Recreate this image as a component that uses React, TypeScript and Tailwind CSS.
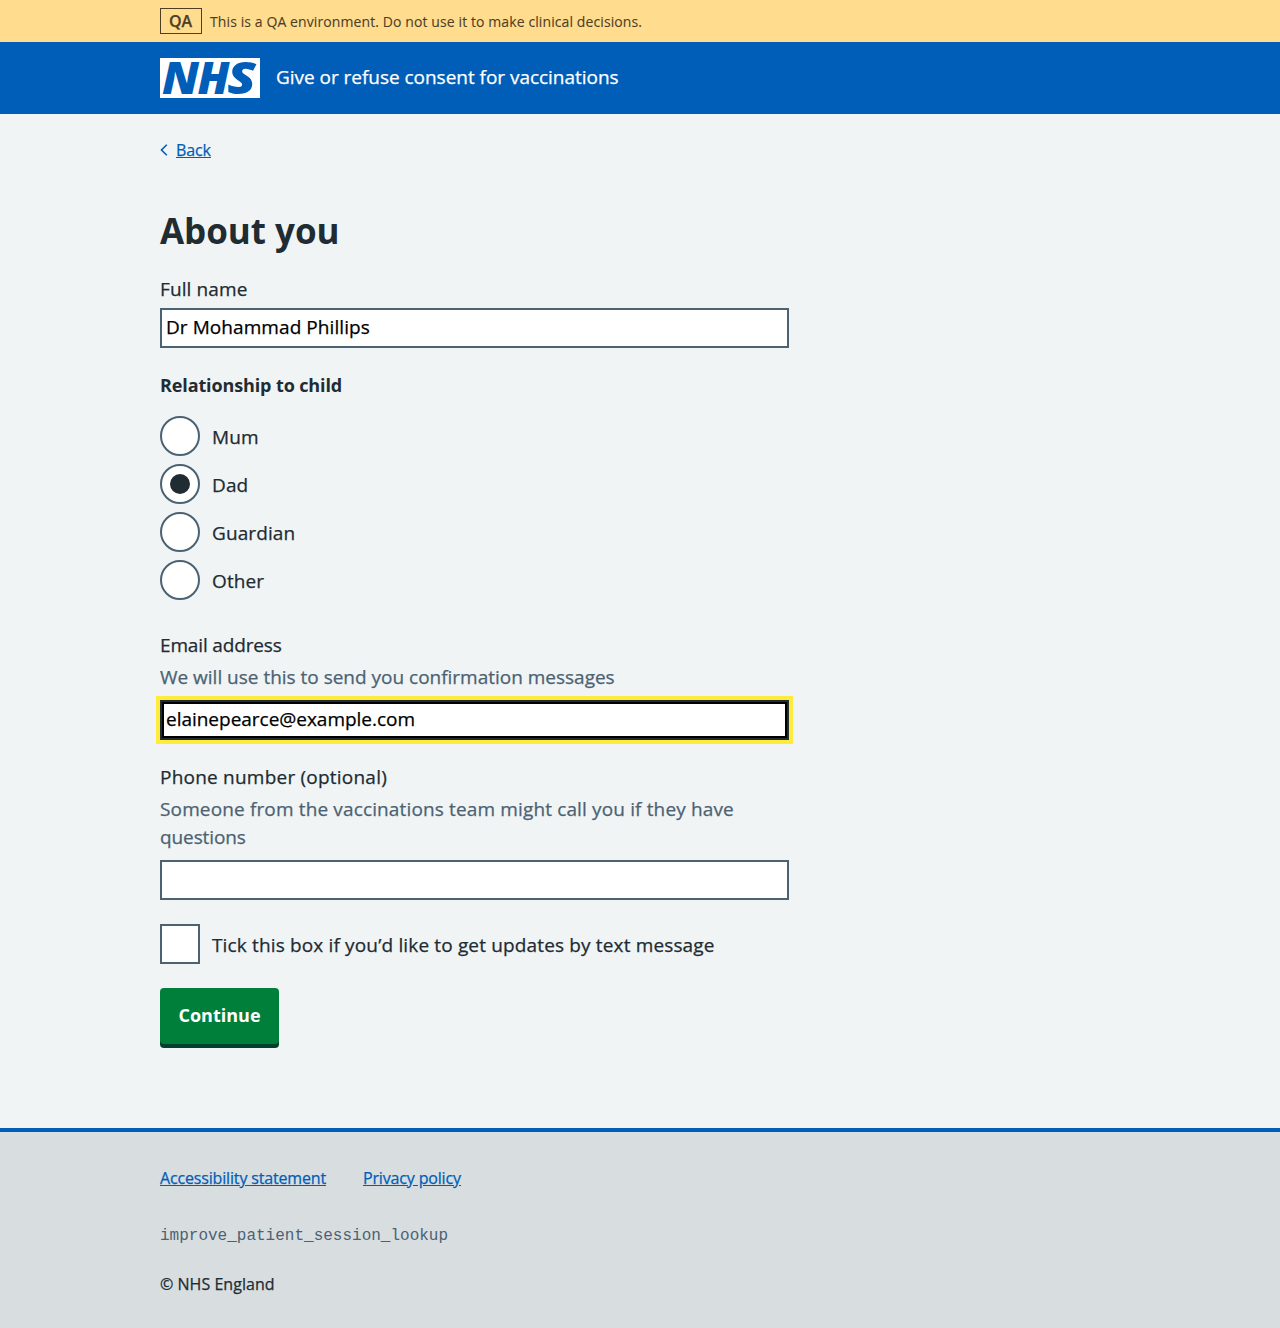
import type { ReactNode } from "react";

function NhsLogo() {
  return (
    <svg className="block h-10 w-[100px] shrink-0 overflow-visible" viewBox="0 0 100 40" role="img" aria-label="NHS">
      <rect width="100" height="40" fill="#fff" />
      <g
        fill="#005eb8"
        fontFamily="'Noto Sans', 'Open Sans', sans-serif"
        fontWeight="900"
        fontStyle="italic"
        fontSize="45"
      >
        <text x="2" y="36" textLength="37" lengthAdjust="spacingAndGlyphs">N</text>
        <text x="37.6" y="36" textLength="32" lengthAdjust="spacingAndGlyphs">H</text>
        <text x="67.3" y="36" textLength="28.7" lengthAdjust="spacingAndGlyphs">S</text>
      </g>
    </svg>
  );
}

function Container({ className, children }: { className?: string; children: ReactNode }) {
  return <div className={`mx-auto w-[960px] ${className ?? ""}`}>{children}</div>;
}

const relationships = [
  { label: "Mum", checked: false },
  { label: "Dad", checked: true },
  { label: "Guardian", checked: false },
  { label: "Other", checked: false },
];

export default function App() {
  return (
    <div className="flex min-h-[1328px] flex-col bg-[#f0f4f5] font-['Open_Sans',sans-serif] text-[19px] leading-7 text-[#212b32] [-webkit-text-stroke-width:0.25px]">
      <div className="h-[42px] bg-[#ffdc8e] text-[#4d3f25]">
        <Container className="flex items-start gap-2 pt-2">
          <strong className="flex h-[26px] w-[42px] items-center justify-center border border-[#4d3f25] pr-px text-[16px] leading-6 font-semibold">
            QA
          </strong>
          <span className="pt-[2px] text-[14px] leading-6 tracking-[0.1px] [-webkit-text-stroke-width:0.1px]">
            This is a QA environment. Do not use it to make clinical decisions.
          </span>
        </Container>
      </div>

      <header className="h-[72px] bg-[#005eb8] text-white">
        <Container className="flex h-full items-center gap-4 [-webkit-text-stroke-width:0]">
          <NhsLogo />
          <span className="pb-0.5 tracking-[-0.03px] [-webkit-text-stroke-width:0.25px]">Give or refuse consent for vaccinations</span>
        </Container>
      </header>

      <Container>
        <a href="#" className="mt-6 flex h-6 items-center text-[16px] leading-6 text-[#005eb8]">
          <svg className="mr-2 h-3 w-2" viewBox="0 0 8 12" fill="none" stroke="currentColor" strokeWidth="1.6">
            <path d="M6.8 0.8 1.5 6l5.3 5.2" />
          </svg>
          <span className="tracking-[-0.1px] underline underline-offset-1">Back</span>
        </a>

        <form className="mt-[47px] w-[629px]">
          <h1 className="text-[35px] leading-[44px] font-bold tracking-[-0.04px] [-webkit-text-stroke-width:0]">About you</h1>

          <label htmlFor="name" className="mt-[22px] block tracking-[0.12px]">Full name</label>
          <input
            id="name"
            defaultValue="Dr Mohammad Phillips"
            className="mt-[5px] block h-10 w-full border-2 border-[#4c6272] bg-white px-1 pb-0.5 text-black tracking-[0.07px]"
          />

          <fieldset className="mt-[23px]">
            <legend className="text-[18px] font-bold tracking-[-0.12px] [-webkit-text-stroke-width:0]">Relationship to child</legend>
            <div className="mt-[17px] flex flex-col gap-2">
              {relationships.map((r) => (
                <label key={r.label} className="flex h-10 items-center gap-3">
                  <span className="flex size-10 items-center justify-center rounded-full border-2 border-[#4c6272] bg-white">
                    {r.checked && <span className="size-5 rounded-full bg-[#212b32]" />}
                  </span>
                  <span className="pt-0.5 tracking-[0.1px]">{r.label}</span>
                </label>
              ))}
            </div>
          </fieldset>

          <label htmlFor="email" className="mt-[31px] block tracking-[-0.15px]">Email address</label>
          <p className="mt-1 tracking-[-0.01px] text-[#4c6272]">We will use this to send you confirmation messages</p>
          <input
            id="email"
            defaultValue="elainepearce@example.com"
            className="mt-[9px] block h-10 w-full border-2 border-[#212b32] bg-white px-1 pb-0.5 text-black tracking-[-0.02px] shadow-[inset_0_0_0_2px_#000,0_0_0_4px_#ffeb3b]"
          />

          <label htmlFor="phone" className="mt-[23px] block tracking-[0.22px]">Phone number (optional)</label>
          <p className="mt-1 tracking-[0.14px] text-[#4c6272]">
            Someone from the vaccinations team might call you if they have
            <br />
            <span className="tracking-[-0.1px]">questions</span>
          </p>
          <input id="phone" className="mt-[9px] block h-10 w-full border-2 border-[#4c6272] bg-white px-1" />

          <label className="mt-6 flex h-10 items-center gap-3">
            <span className="size-10 border-2 border-[#4c6272] bg-white" />
            <span className="pt-0.5 tracking-[0.15px]">Tick this box if you’d like to get updates by text message</span>
          </label>

          <button
            type="button"
            className="mt-6 flex h-14 w-[119px] items-center justify-center rounded-[4px] bg-[#007f3b] pb-0.5 text-[18px] font-bold tracking-[0.02px] text-white shadow-[0_4px_0_#00402c] [-webkit-text-stroke-width:0]"
          >
            Continue
          </button>
        </form>
      </Container>

      <footer className="mt-[84px] h-[200px] border-t-4 border-[#005eb8] bg-[#d8dde0] text-[16px] leading-6">
        <Container className="pt-[34px]">
          <nav className="flex gap-[37px] text-[#005eb8] underline underline-offset-1">
            <a href="#" className="w-[166px] tracking-[-0.16px] whitespace-nowrap">Accessibility statement</a>
            <a href="#" className="tracking-[-0.16px]">Privacy policy</a>
          </nav>
          <p className="mt-[34px] font-['Liberation_Mono',monospace] text-[#4c6272] [-webkit-text-stroke-width:0]">improve_patient_session_lookup</p>
          <p className="mt-[24px] tracking-[0.03px]">© NHS England</p>
        </Container>
      </footer>
    </div>
  );
}
